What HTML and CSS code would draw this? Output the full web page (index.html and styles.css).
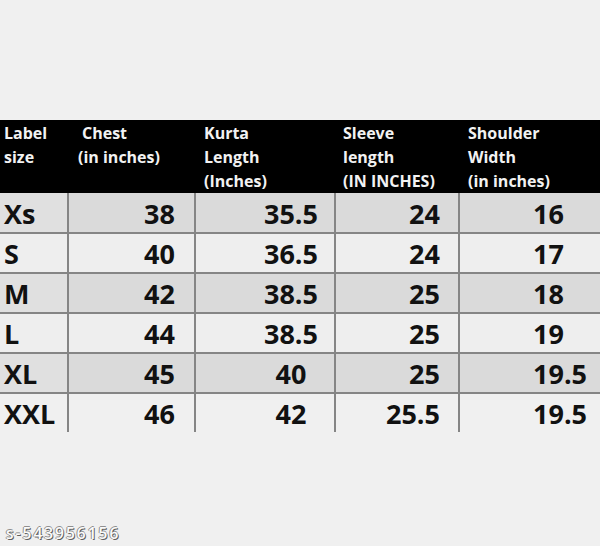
FILE: index.html
```html
<!DOCTYPE html>
<html>
<head>
<meta charset="utf-8">
<link rel="stylesheet" href="styles.css">
</head>
<body>
<div class="page">
  <table class="chart">
    <colgroup>
      <col class="c1"><col class="c2"><col class="c3"><col class="c4"><col class="c5">
    </colgroup>
    <thead>
      <tr>
        <th class="h1">Label<br>size</th>
        <th class="h2">Chest<br>(in inches)</th>
        <th class="h3">Kurta<br>Length<br>(Inches)</th>
        <th class="h4">Sleeve<br>length<br>(IN INCHES)</th>
        <th class="h5">Shoulder<br>Width<br>(in inches)</th>
      </tr>
    </thead>
    <tbody>
      <tr class="dark"><td class="lbl">Xs</td><td class="chest">38</td><td class="kurta">35.5</td><td class="sleeve">24</td><td class="shoulder">16</td></tr>
      <tr class="light"><td class="lbl">S</td><td class="chest">40</td><td class="kurta">36.5</td><td class="sleeve">24</td><td class="shoulder">17</td></tr>
      <tr class="dark"><td class="lbl">M</td><td class="chest">42</td><td class="kurta">38.5</td><td class="sleeve">25</td><td class="shoulder">18</td></tr>
      <tr class="light"><td class="lbl">L</td><td class="chest">44</td><td class="kurta">38.5</td><td class="sleeve">25</td><td class="shoulder">19</td></tr>
      <tr class="dark"><td class="lbl">XL</td><td class="chest">45</td><td class="kurta">40</td><td class="sleeve">25</td><td class="shoulder">19.5</td></tr>
      <tr class="last"><td class="lbl">XXL</td><td class="chest">46</td><td class="kurta">42</td><td class="sleeve">25.5</td><td class="shoulder">19.5</td></tr>
    </tbody>
  </table>
  <div class="mark">s-543956156</div>
</div>
</body>
</html>
```

FILE: styles.css
```css
html, body {
  margin: 0;
  padding: 0;
  background: #f0f0f0;
}
.page {
  width: 600px;
  height: 546px;
  overflow: hidden;
  background: #f0f0f0;
}
.chart {
  margin-top: 120px;
  width: 600px;
  table-layout: fixed;
  border-collapse: collapse;
  font-family: "Open Sans", "Liberation Sans", sans-serif;
  font-weight: 700;
  color: #111;
}
.c1 { width: 68px; }
.c2 { width: 127px; }
.c3 { width: 140px; }
.c4 { width: 124px; }
.c5 { width: 141px; }

.chart th {
  background: #000;
  color: #f2f2f2;
  height: 73px;
  box-sizing: border-box;
  padding: 1px 0 0 0;
  vertical-align: top;
  text-align: left;
  font-size: 16px;
  line-height: 24px;
  font-weight: 700;
  white-space: nowrap;
}
.h1 { padding-left: 4px !important; }
.h2 { padding-left: 10px !important; text-indent: 4px; }
.h3 { padding-left: 9px !important; }
.h4 { padding-left: 8px !important; }
.h5 { padding-left: 9px !important; }

.chart td {
  height: 40px;
  box-sizing: border-box;
  padding: 2px 0 0 0;
  font-size: 27px;
  line-height: 36px;
  border-bottom: 2px solid #858585;
  border-left: 2px solid #858585;
  white-space: nowrap;
}
.chart td.lbl { border-left: none; padding-left: 4px; text-align: left; }
.chart tr.dark td { background: #dadada; }
.chart tr.dark td.lbl { background: #e0e0e0; }
.chart tr.light td { background: #eeeeee; }
.chart tr.last td { background: #f0f0f0; border-bottom: none; height: 36px; }

.chart td.chest { text-align: right; padding-right: 19px; }
.chart td.kurta { text-align: center; padding-left: 52px; }
.chart td.sleeve { text-align: right; padding-right: 18px; }
.chart td.shoulder { text-align: left; padding-left: 73px; }

.mark {
  margin-top: 91px;
  padding-left: 6px;
  font-family: "Open Sans", "Liberation Sans", sans-serif;
  font-size: 15.5px;
  line-height: 20px;
  letter-spacing: 2px;
  font-weight: 600;
  color: #fbfbfb;
  text-shadow: 1px 1px 0 #5f5f5f, -1px 0 0 #8f8f8f, 0 -1px 0 #8f8f8f;
}
```
